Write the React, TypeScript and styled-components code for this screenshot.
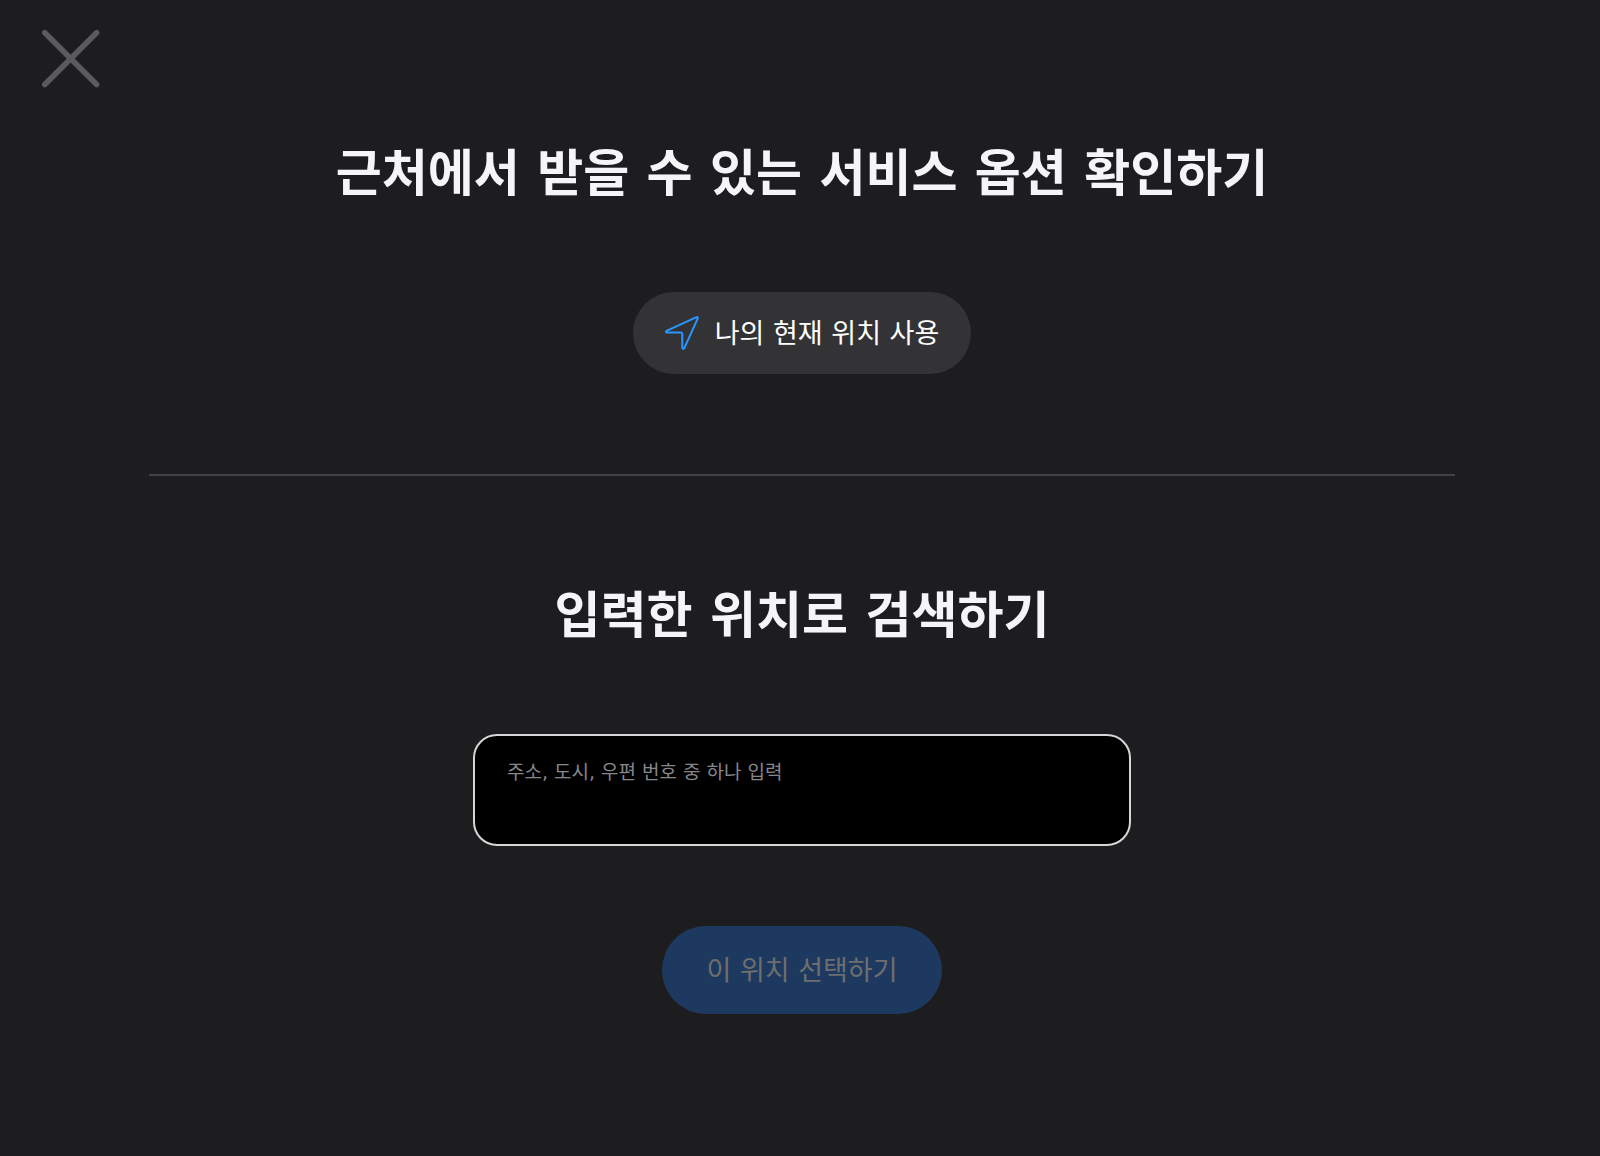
import React, { useState } from "react";
import styled, { createGlobalStyle } from "styled-components";

const GlobalStyle = createGlobalStyle`
  * { box-sizing: border-box; }
  body {
    margin: 0;
    background: #1d1d1f;
    color: #f5f5f7;
    font-family: "DejaVu Sans", "Noto Sans CJK KR", sans-serif;
  }
`;

const Sheet = styled.main`
  min-height: 100vh;
  background: #1d1d1f;
  padding: 24px 36px 0;
`;

const CloseButton = styled.button`
  display: block;
  width: 70px;
  height: 70px;
  padding: 0;
  border: 0;
  background: none;
  color: #5b5b5e;
  cursor: pointer;
  svg { display: block; }
`;

const Content = styled.div`
  display: flex;
  flex-direction: column;
  align-items: center;
  margin: 0 109px 0 113px;
`;

const Section = styled.section`
  display: flex;
  flex-direction: column;
  align-items: center;
  width: 100%;
  padding-top: 46px;
`;

const Divider = styled.hr`
  width: 100%;
  height: 2px;
  margin: 100px 0 60px;
  border: 0;
  background: #424245;
`;

const Title = styled.h2`
  margin: 0 0 84px;
  font-size: 50px;
  line-height: 68px;
  font-weight: 700;
  text-align: center;
`;

const Pill = styled.button<{ $primary?: boolean }>`
  display: flex;
  align-items: center;
  gap: 16px;
  height: ${(p) => (p.$primary ? 88 : 82)}px;
  padding: 0 ${(p) => (p.$primary ? 44 : 32)}px;
  border: 0;
  border-radius: 44px;
  background: ${(p) => (p.$primary ? "#1d3960" : "#333336")};
  color: ${(p) => (p.$primary ? "#6e6e6e" : "#ffffff")};
  font-family: inherit;
  font-size: 27px;
  line-height: 40px;
  font-weight: 400;
`;

const PillText = styled.span`
  padding-top: 2px;
`;

const Field = styled.label`
  display: flex;
  flex-direction: column;
  width: 658px;
  max-width: 100%;
  height: 112px;
  margin-bottom: 80px;
  padding: 20px 32px;
  border: 2px solid #d6d6d6;
  border-radius: 24px;
  background: #000;
  color: #86868b;
  font-size: 19px;
  line-height: 32px;
`;

const Input = styled.input`
  width: 100%;
  height: 36px;
  padding: 0;
  border: 0;
  outline: 0;
  background: transparent;
  color: #f5f5f7;
  font-family: inherit;
  font-size: 27px;
`;

export default function App() {
  const [place, setPlace] = useState("");
  return (
    <Sheet>
      <GlobalStyle />
      <CloseButton type="button" aria-label="닫기">
        <svg width="70" height="70" viewBox="0 0 70 70" fill="none" stroke="currentColor" strokeWidth="5.6" strokeLinecap="round" aria-hidden="true">
          <path d="M8.8 8.8L60.6 60.6M60.6 8.8L8.8 60.6" />
        </svg>
      </CloseButton>
      <Content>
        <Section>
          <Title>근처에서 받을 수 있는 서비스 옵션 확인하기</Title>
          <Pill type="button">
            <svg width="34" height="34" viewBox="0 0 34 34" fill="none" stroke="#2997ff" strokeWidth="2" strokeLinejoin="round" aria-hidden="true">
              <path d="M31.6 1.1L1.5 14.8Q0.3 16.4 1.9 16.6L15.6 16.6Q17.3 16.7 17.3 18.4L17.3 31.8Q17.9 33.7 19.2 32.4L32.8 2.4Q33.1 0.9 31.6 1.1Z" />
            </svg>
            <PillText>나의 현재 위치 사용</PillText>
          </Pill>
        </Section>
        <Divider />
        <Section>
          <Title>입력한 위치로 검색하기</Title>
          <Field>
            주소, 도시, 우편 번호 중 하나 입력
            <Input value={place} onChange={(e) => setPlace(e.target.value)} />
          </Field>
          <Pill type="submit" $primary disabled={!place}>
            <PillText>이 위치 선택하기</PillText>
          </Pill>
        </Section>
      </Content>
    </Sheet>
  );
}
